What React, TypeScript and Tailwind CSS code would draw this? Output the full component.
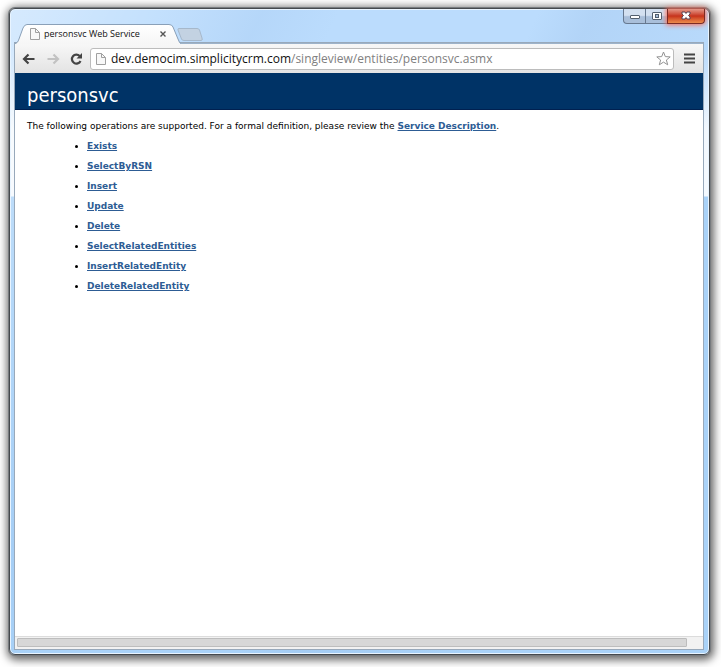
import React from "react";

const operations = [
  "Exists",
  "SelectByRSN",
  "Insert",
  "Update",
  "Delete",
  "SelectRelatedEntities",
  "InsertRelatedEntity",
  "DeleteRelatedEntity",
];

function PageIcon() {
  return (
    <svg className="h-3 w-[10px] shrink-0" viewBox="0 0 10 12" aria-hidden="true">
      <path d="M.5.5h5l4 4v7h-9z" fill="#f8f8f8" stroke="#a0a0a0" />
      <path d="M5.5.5v4h4" fill="none" stroke="#a0a0a0" />
    </svg>
  );
}

function WindowControls() {
  return (
    <div className="-mr-[2px] flex h-[15px] self-start text-[#53606f]">
      <button
        type="button"
        aria-label="Minimize"
        className="flex w-[23px] items-center justify-center rounded-bl border border-t-0 border-[#66788f] bg-linear-to-b from-[#d3e0f0] from-45% to-[#a9bfda] to-55%"
      >
        <svg className="h-3 w-3" viewBox="0 0 12 12" aria-hidden="true">
          <rect x="1.5" y="5.5" width="9" height="3" rx=".5" fill="#fff" stroke="currentColor" />
        </svg>
      </button>
      <button
        type="button"
        aria-label="Maximize"
        className="flex w-[21px] items-center justify-center border-b border-[#66788f] bg-linear-to-b from-[#d3e0f0] from-45% to-[#a9bfda] to-55%"
      >
        <svg className="h-3 w-3" viewBox="0 0 12 12" aria-hidden="true">
          <rect x="1.5" y="2.5" width="9" height="7" rx=".5" fill="#fff" stroke="currentColor" />
          <rect x="4.5" y="4.5" width="3" height="3" fill="#a9bfda" stroke="currentColor" />
        </svg>
      </button>
      <button
        type="button"
        aria-label="Close window"
        className="flex w-[38px] items-center justify-center rounded-br border border-t-0 border-[#7c2b25] bg-linear-to-b from-[#e3988a] via-[#c6311b] via-50% to-[#ec8a4c] shadow-[0_0_5px_1px_#ff6b55]"
      >
        <svg className="h-3 w-3" viewBox="0 0 12 12" aria-hidden="true">
          <path d="M2 2h3l1 1.500L7 2h3v2L8.500 5.500 10 7v2H7L6 7.500 5 9H2V7l1.500-1.500L2 4z" fill="#fff" stroke="#5b4250" />
        </svg>
      </button>
    </div>
  );
}

function TitleBar() {
  return (
    <div className="flex h-[34px] shrink-0">
      <div className="relative mt-[15px] -mb-px flex h-5 w-[166px] shrink-0 items-center pl-[15px]">
        <svg className="absolute inset-0 h-full w-full" viewBox="0 0 166 20" aria-hidden="true">
          <defs>
            <linearGradient id="tabFill" x1="0" y1="0" x2="0" y2="1">
              <stop offset="0" stopColor="#ffffff" />
              <stop offset="1" stopColor="#f6f6f6" />
            </linearGradient>
          </defs>
          <path
            d="M0 20C2 19 3 18 4 15L8 4Q9.500.5 12 .5H154Q157 .5 158 3L163 15Q164.500 19.500 166 20Z"
            fill="url(#tabFill)"
          />
          <path
            d="M0 19.500C2 19 3 18 4 15L8 4Q9.500.5 12 .5H154Q157 .5 158 3L163 15Q164.500 19.500 166 19.500"
            fill="none"
            stroke="#8aa0b8"
          />
        </svg>
        <div className="relative flex w-[138px] items-center">
          <PageIcon />
          <span className="ml-1 grow text-[9px] leading-4 text-[#111]">personsvc Web Service</span>
          <button type="button" aria-label="Close tab" className="flex h-3 w-[10px] items-center justify-center">
            <svg className="h-[6px] w-[6px]" viewBox="0 0 6 6" aria-hidden="true">
              <path d="M.5.5l5 5M5.500.5l-5 5" stroke="#555" strokeWidth="1.400" />
            </svg>
          </button>
        </div>
      </div>
      <button type="button" aria-label="New tab" className="-ml-1 mt-[19px] h-[13px] w-[26px] shrink-0">
        <svg className="h-[13px] w-[26px]" viewBox="0 0 26 13" aria-hidden="true">
          <path
            d="M2 .5H20Q22 .5 22.500 2L25 10Q26 12.500 24 12.500H7Q5 12.500 4.500 11L1 2Q.5 .5 2 .5Z"
            fill="#c3d2e2"
            stroke="#a6b8cb"
          />
        </svg>
      </button>
      <div className="grow" />
      <WindowControls />
    </div>
  );
}

function Toolbar() {
  return (
    <div className="flex h-[30px] shrink-0 items-center border-t border-[#9db3ca] bg-linear-to-b from-[#f7f7f7] to-[#e3e3e3] pr-2 pl-[7px]">
      <button type="button" aria-label="Back" className="mr-3 h-[14px] w-[13px]">
        <svg className="h-[14px] w-[13px]" viewBox="0 0 13 14" aria-hidden="true">
          <path d="M12.500 7H2M6.500 2.500L2 7l4.500 4.500" fill="none" stroke="#444" strokeWidth="2.200" />
        </svg>
      </button>
      <button type="button" aria-label="Forward" className="mr-[10px] h-[14px] w-[13px]">
        <svg className="h-[14px] w-[13px]" viewBox="0 0 13 14" aria-hidden="true">
          <path d="M.5 7H11M6.500 2.500L11 7l-4.500 4.500" fill="none" stroke="#c2c2c2" strokeWidth="2.200" />
        </svg>
      </button>
      <button type="button" aria-label="Reload" className="mr-[7px] h-[14px] w-[13px]">
        <svg className="h-[14px] w-[13px]" viewBox="0 0 13 14" aria-hidden="true">
          <path d="M9.700 4A4.500 4.500 0 1 0 10.500 9" fill="none" stroke="#444" strokeWidth="2.200" />
          <path d="M12 1v5.500H6.500z" fill="#444" />
        </svg>
      </button>
      <div className="flex h-[22px] min-w-0 grow items-center rounded-[3px] border border-[#bcbcbc] bg-white pr-[2px] pl-[5px]">
        <PageIcon />
        <a href="#top" className="ml-[5px] grow truncate text-[12px] leading-[18px] text-[#808080]">
          <span className="text-[#111]">dev.democim.simplicitycrm.com</span>/singleview/entities/personsvc.asmx
        </a>
        <button type="button" aria-label="Bookmark this page" className="h-[15px] w-[15px]">
          <svg className="h-[15px] w-[15px]" viewBox="0 0 15 15" aria-hidden="true">
            <path
              d="M7.500 1l1.800 4.600 4.900.3-3.800 3.100 1.300 4.800-4.200-2.700-4.200 2.700 1.300-4.800L.8 5.900l4.900-.3z"
              fill="#fff"
              stroke="#929292"
              strokeLinejoin="round"
            />
          </svg>
        </button>
      </div>
      <button type="button" aria-label="Menu" className="ml-[10px] h-[11px] w-[11px]">
        <svg className="h-[11px] w-[11px]" viewBox="0 0 11 11" aria-hidden="true">
          <path d="M0 1.500h11M0 5.500h11M0 9.500h11" stroke="#444" strokeWidth="2" />
        </svg>
      </button>
    </div>
  );
}

export default function App() {
  return (
    <div className="flex h-screen bg-white pt-2 pr-[11px] pb-3 pl-[9px] font-['Open_Sans','Noto_Sans',sans-serif]">
      <div className="flex min-w-0 grow flex-col rounded-md border border-[#45494d] bg-[linear-gradient(115deg,#ffffff66_0px,#ffffff22_130px,#8fb4e022_230px,#ffffff00_300px,#ffffff00_480px,#8fb4e033_530px,#ffffff00_700px),linear-gradient(to_bottom,#bbdcfd_0px,#bbdcfd_40px,#f4f9fe_120px,#f4f9fe_187px,#a9d2f8_188px)] pr-[6px] pb-[5px] pl-[5px] shadow-[inset_0_0_0_1px_#e8f4ff,0_0_0_1px_#777b7f,1px_2px_9px_3px_#00000099]">
        <TitleBar />
        <div className="flex min-h-0 grow flex-col outline outline-[#98a9bb]">
          <Toolbar />
          <main className="flex min-h-0 grow flex-col bg-white font-['DejaVu_Sans',sans-serif]">
            <h1 className="h-[37px] shrink-0 border-b border-[#002050] bg-[#003366] pt-2 pl-3 font-['DejaVu_Sans_Condensed','Noto_Sans',sans-serif] text-[20px] leading-7 text-white">
              personsvc
            </h1>
            <div className="min-h-0 grow overflow-hidden px-3 pt-[6px] text-[9px] leading-5 text-black">
              <p>
                The following operations are supported. For a formal definition, please review the{" "}
                <a href="#description" className="font-bold text-[#2d5c94] underline">
                  Service Description
                </a>
                .
              </p>
              <ul className="list-disc pl-[60px]">
                {operations.map((name) => (
                  <li key={name}>
                    <a href={"#" + name} className="font-bold text-[#2d5c94] underline">
                      {name}
                    </a>
                  </li>
                ))}
              </ul>
            </div>
            <div className="h-[13px] shrink-0 border-t border-[#dcdcdc] bg-[#f2f2f2] pt-px pr-4 pl-[2px]">
              <div className="h-[9px] rounded-[1px] border border-[#bdbdbd] bg-[#d7d7d7]" />
            </div>
          </main>
        </div>
      </div>
    </div>
  );
}
